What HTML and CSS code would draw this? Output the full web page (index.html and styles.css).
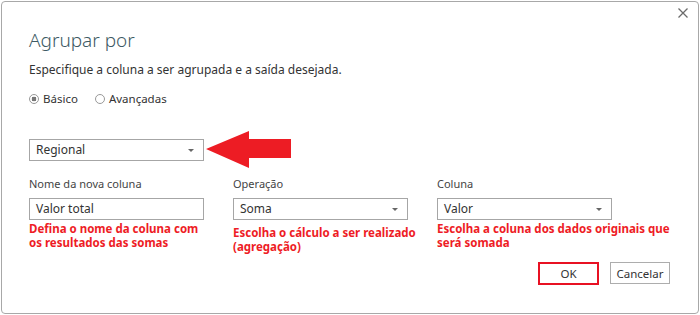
FILE: index.html
```html
<!DOCTYPE html>
<html lang="pt-BR">
<head>
  <meta charset="UTF-8" />
  <title>Agrupar por</title>
  <link rel="stylesheet" href="styles.css">
</head>
<body>

  <div class="dialog">
    <button class="close" aria-label="Fechar">
      <svg width="10" height="10" viewBox="0 0 10 10">
        <path d="M0.5 0.5 L9.5 9.5 M9.5 0.5 L0.5 9.5" stroke="#6b6b6b" stroke-width="1.3" fill="none" />
      </svg>
    </button>

    <h1 class="title">Agrupar por</h1>
    <p class="subtitle">Especifique a coluna a ser agrupada e a saída desejada.</p>

    <div class="mode">
      <label class="radio"><span class="dot checked"></span>Básico</label>
      <label class="radio"><span class="dot"></span>Avançadas</label>
    </div>

    <div class="group-row">
      <div class="box select">Regional<span class="caret"></span></div>
      <!-- seta vermelha apontando para o campo de agrupamento -->
      <svg class="arrow" width="86" height="38" viewBox="0 0 86 38">
        <polygon points="0,18 43,0 43,8 85,8 85,27 43,27 43,37" fill="#ed1c24" />
      </svg>
    </div>

    <div class="fields">
      <div class="field">
        <div class="label">Nome da nova coluna</div>
        <div class="box">Valor total</div>
        <p class="note">Defina o nome da coluna com<br>os resultados das somas</p>
      </div>
      <div class="field">
        <div class="label">Operação</div>
        <div class="box select">Soma<span class="caret"></span></div>
        <p class="note lower">Escolha o cálculo a ser realizado<br>(agregação)</p>
      </div>
      <div class="field">
        <div class="label">Coluna</div>
        <div class="box select">Valor<span class="caret"></span></div>
        <p class="note">Escolha a coluna dos dados originais que<br>será somada</p>
      </div>
    </div>

    <div class="actions">
      <button class="btn ok">OK</button>
      <button class="btn">Cancelar</button>
    </div>
  </div>

</body>
</html>
```

FILE: styles.css
```css
body {
  margin: 0;
  background: #fff;
  font-family: "Segoe UI", "Noto Sans", sans-serif;
  color: #333;
}
.dialog {
  position: relative;
  box-sizing: border-box;
  width: 698px;
  height: 313px;
  margin: 1px 0 0 1px;
  padding: 24px 27px 0 27px;
  border: 1px solid #a8a8a8;
  border-radius: 4px;
  background: #fff;
}
.close {
  position: absolute;
  top: 0;
  right: 4px;
  width: 22px;
  height: 22px;
  padding: 0;
  border: none;
  background: none;
  display: flex;
  align-items: center;
  justify-content: center;
}
.title {
  margin: 0;
  font-size: 19px;
  line-height: 28px;
  font-weight: 300;
  color: #3d5a64;
}
.subtitle {
  margin: 8px 0 0;
  font-size: 12px;
  line-height: 16px;
  color: #333;
}
.mode {
  display: flex;
  gap: 17px;
  margin-top: 13px;
  font-size: 11.5px;
  line-height: 16px;
}
.radio {
  display: flex;
  align-items: center;
  gap: 4px;
}
.dot {
  box-sizing: border-box;
  width: 10px;
  height: 10px;
  border: 1px solid #999;
  border-radius: 50%;
  background: #fff;
}
.dot.checked {
  background: radial-gradient(circle, #777 0 2.2px, #fff 2.6px);
}
.group-row {
  display: flex;
  align-items: center;
  gap: 2px;
  margin-top: 24px;
  height: 38px;
}
.box {
  position: relative;
  box-sizing: border-box;
  width: 175px;
  height: 22px;
  padding: 0 6px;
  border: 1px solid #a6a6a6;
  font-size: 12px;
  line-height: 20px;
  color: #333;
}
.caret {
  position: absolute;
  right: 9px;
  top: 9px;
  border-left: 3px solid transparent;
  border-right: 3px solid transparent;
  border-top: 3px solid #666;
}
.fields {
  display: grid;
  grid-template-columns: repeat(3, 175px);
  column-gap: 29px;
  margin-top: 7px;
}
.label {
  font-size: 11px;
  line-height: 16px;
  margin-bottom: 6px;
  color: #444;
}
.note {
  margin: 2px -60px 0 0;
  font-size: 11.5px;
  line-height: 14px;
  font-weight: 700;
  color: #ee1c25;
}
.note.lower {
  margin-top: 6px;
}
.actions {
  position: absolute;
  right: 28px;
  bottom: 28px;
  display: flex;
  gap: 11px;
}
.btn {
  box-sizing: border-box;
  width: 60px;
  height: 22px;
  padding: 0;
  border: 1px solid #adadad;
  background: #fff;
  font-family: inherit;
  font-size: 11.5px;
  color: #333;
}
.btn.ok {
  width: 61px;
  height: 23px;
  border: 2px solid #e81123;
}
```
